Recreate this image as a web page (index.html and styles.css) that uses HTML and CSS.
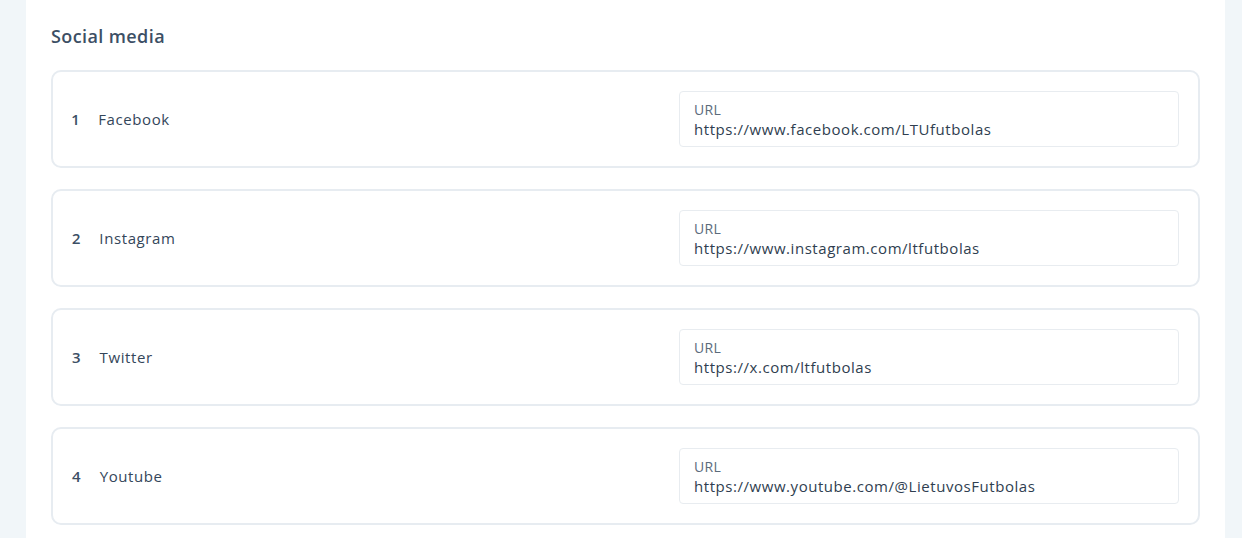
FILE: index.html
```html
<!DOCTYPE html>
<html lang="en">
<head>
<meta charset="utf-8">
<title>Social media</title>
<link rel="stylesheet" href="styles.css">
</head>
<body>
<main class="panel">
  <h2 class="title">Social media</h2>
  <div class="list">
    <div class="card">
      <div class="name"><span class="num">1</span><span class="label">Facebook</span></div>
      <div class="field"><div class="field-label">URL</div><div class="field-value">https://www.facebook.com/LTUfutbolas</div></div>
    </div>
    <div class="card">
      <div class="name"><span class="num">2</span><span class="label">Instagram</span></div>
      <div class="field"><div class="field-label">URL</div><div class="field-value">https://www.instagram.com/ltfutbolas</div></div>
    </div>
    <div class="card">
      <div class="name"><span class="num">3</span><span class="label">Twitter</span></div>
      <div class="field"><div class="field-label">URL</div><div class="field-value">https://x.com/ltfutbolas</div></div>
    </div>
    <div class="card">
      <div class="name"><span class="num">4</span><span class="label">Youtube</span></div>
      <div class="field"><div class="field-label">URL</div><div class="field-value">https://www.youtube.com/@LietuvosFutbolas</div></div>
    </div>
  </div>
</main>
</body>
</html>
```
FILE: styles.css
```css
html, body {
  margin: 0;
  padding: 0;
  background: #f1f6f9;
  font-family: "Open Sans", "Noto Sans", sans-serif;
  color: #2f3e50;
}
.panel {
  margin: 0 17px 0 26px;
  background: #ffffff;
  padding: 24px 25px 0 25px;
  min-height: 538px;
  box-sizing: border-box;
}
.title {
  margin: 0 0 22px 0;
  font-size: 18px;
  letter-spacing: 0.4px;
  line-height: 24px;
  font-weight: 600;
  color: #3c4f65;
}
.list {
  display: flex;
  flex-direction: column;
  gap: 21px;
}
.card {
  display: flex;
  align-items: center;
  justify-content: space-between;
  border: 2px solid #e7ecf1;
  border-radius: 10px;
  padding: 19px;
}
.name {
  display: flex;
  align-items: center;
  gap: 19px;
  font-size: 15px;
  line-height: 20px;
  letter-spacing: 0.6px;
}
.num {
  font-weight: 600;
  color: #3c4f65;
  font-variant-numeric: proportional-nums;
  letter-spacing: 0;
}
.label {
  color: #34465a;
}
.field {
  width: 500px;
  box-sizing: border-box;
  height: 56px;
  border: 1px solid #e8ecf0;
  border-radius: 4px;
  padding: 8px 14px 0 14px;
}
.field-label {
  font-size: 14px;
  line-height: 19px;
  letter-spacing: 0.3px;
  color: #5b6b7c;
}
.field-value {
  font-size: 15px;
  line-height: 21px;
  letter-spacing: 0.55px;
  color: #2f3e50;
}
```
